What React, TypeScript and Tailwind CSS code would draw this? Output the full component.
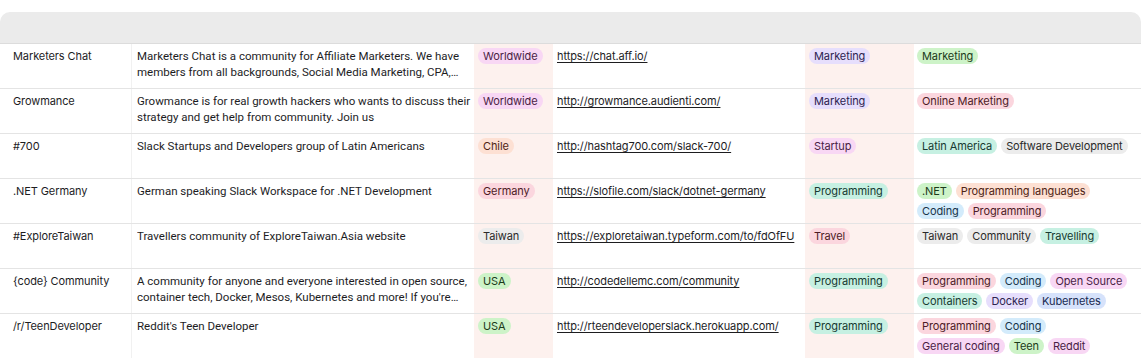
import React from 'react';

type TagColor = 'magenta' | 'lavender' | 'green' | 'pink' | 'peach' | 'grey' | 'teal' | 'sky' | 'blue';

interface Tag {
  label: string;
  color: TagColor;
}

interface Row {
  name: string;
  description: string;
  location: Tag;
  url: string;
  category: Tag;
  tags: Tag[];
}

const tagStyles: Record<TagColor, string> = {
  magenta: 'bg-[#f8d7f4] text-[#4a1d45]',
  lavender: 'bg-[#e6defc] text-[#2d2350]',
  green: 'bg-[#cdf3c8] text-[#1c3a19]',
  pink: 'bg-[#fbd6de] text-[#4d1b26]',
  peach: 'bg-[#fde0d3] text-[#4f2414]',
  grey: 'bg-[#ececec] text-[#2a2a2a]',
  teal: 'bg-[#c6f0e2] text-[#173a31]',
  sky: 'bg-[#d3ebfb] text-[#17344a]',
  blue: 'bg-[#d6e2fb] text-[#1a2b52]',
};

const rows: Row[] = [
  {
    name: 'Marketers Chat',
    description:
      'Marketers Chat is a community for Affiliate Marketers. We have members from all backgrounds, Social Media Marketing, CPA, affiliate networks and more.',
    location: { label: 'Worldwide', color: 'magenta' },
    url: 'https://chat.aff.io/',
    category: { label: 'Marketing', color: 'lavender' },
    tags: [{ label: 'Marketing', color: 'green' }],
  },
  {
    name: 'Growmance',
    description:
      'Growmance is for real growth hackers who wants to discuss their strategy and get help from community. Join us',
    location: { label: 'Worldwide', color: 'magenta' },
    url: 'http://growmance.audienti.com/',
    category: { label: 'Marketing', color: 'lavender' },
    tags: [{ label: 'Online Marketing', color: 'pink' }],
  },
  {
    name: '#700',
    description: 'Slack Startups and Developers group of Latin Americans',
    location: { label: 'Chile', color: 'peach' },
    url: 'http://hashtag700.com/slack-700/',
    category: { label: 'Startup', color: 'magenta' },
    tags: [
      { label: 'Latin America', color: 'teal' },
      { label: 'Software Development', color: 'grey' },
    ],
  },
  {
    name: '.NET Germany',
    description: 'German speaking Slack Workspace for .NET Development',
    location: { label: 'Germany', color: 'pink' },
    url: 'https://slofile.com/slack/dotnet-germany',
    category: { label: 'Programming', color: 'teal' },
    tags: [
      { label: '.NET', color: 'green' },
      { label: 'Programming languages', color: 'peach' },
      { label: 'Coding', color: 'sky' },
      { label: 'Programming', color: 'pink' },
    ],
  },
  {
    name: '#ExploreTaiwan',
    description: 'Travellers community of ExploreTaiwan.Asia website',
    location: { label: 'Taiwan', color: 'grey' },
    url: 'https://exploretaiwan.typeform.com/to/fdOfFU',
    category: { label: 'Travel', color: 'pink' },
    tags: [
      { label: 'Taiwan', color: 'grey' },
      { label: 'Community', color: 'grey' },
      { label: 'Travelling', color: 'teal' },
    ],
  },
  {
    name: '{code} Community',
    description:
      "A community for anyone and everyone interested in open source, container tech, Docker, Mesos, Kubernetes and more! If you're new to open source, join us.",
    location: { label: 'USA', color: 'green' },
    url: 'http://codedellemc.com/community',
    category: { label: 'Programming', color: 'teal' },
    tags: [
      { label: 'Programming', color: 'pink' },
      { label: 'Coding', color: 'sky' },
      { label: 'Open Source', color: 'magenta' },
      { label: 'Containers', color: 'teal' },
      { label: 'Docker', color: 'lavender' },
      { label: 'Kubernetes', color: 'blue' },
    ],
  },
  {
    name: '/r/TeenDeveloper',
    description: "Reddit's Teen Developer",
    location: { label: 'USA', color: 'green' },
    url: 'http://rteendeveloperslack.herokuapp.com/',
    category: { label: 'Programming', color: 'teal' },
    tags: [
      { label: 'Programming', color: 'pink' },
      { label: 'Coding', color: 'sky' },
      { label: 'General coding', color: 'magenta' },
      { label: 'Teen', color: 'green' },
      { label: 'Reddit', color: 'magenta' },
    ],
  },
];

const Pill: React.FC<{ tag: Tag }> = ({ tag }) => (
  <span
    className={`inline-flex h-4 items-center rounded-full px-[5px] text-[11px] leading-4 whitespace-nowrap ${tagStyles[tag.color]}`}
  >
    {tag.label}
  </span>
);

const App: React.FC = () => {
  return (
    <div
      className="w-[1141px] h-[358px] overflow-hidden bg-white pt-3 text-[11px] leading-4 tracking-[-0.1px] text-[#1d1d1f]"
      style={{ fontFamily: 'Inter, "Noto Sans", sans-serif' }}
    >
      <div className="h-8 rounded-t-[10px] bg-[#ebebeb] border-b border-[#dcdcdc]" />
      {rows.map((row) => (
        <div key={row.name} className="flex h-[45px] border-b border-[#e4e4e4]">
          <div className="w-[132px] shrink-0 border-r border-[#f1f1f1] pl-[13px] pt-1">{row.name}</div>
          <div className="w-[342px] shrink-0 pl-[5px] pt-1">
            <p className="line-clamp-2 font-['Roboto',sans-serif] text-[11.5px] tracking-normal">
              {row.description}
            </p>
          </div>
          <div className="w-[79px] shrink-0 bg-[#fdf1ee] pl-1 pt-1">
            <Pill tag={row.location} />
          </div>
          <div className="w-[252px] shrink-0 pl-1 pt-1">
            <span className="underline underline-offset-2 whitespace-nowrap">{row.url}</span>
          </div>
          <div className="w-[109px] shrink-0 bg-[#fdf1ee] pl-1 pt-1">
            <Pill tag={row.category} />
          </div>
          <div className="flex flex-1 flex-wrap content-start gap-1 pl-[3px] pr-2 pt-1">
            {row.tags.map((tag) => (
              <Pill key={tag.label} tag={tag} />
            ))}
          </div>
        </div>
      ))}
    </div>
  );
};

export default App;
